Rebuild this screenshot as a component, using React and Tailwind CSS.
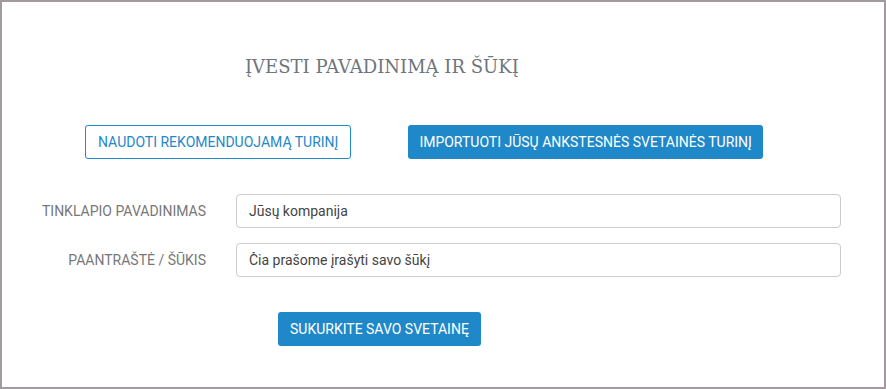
import React from 'react';

function FormRow({ label, value }) {
  return (
    <div className="flex items-center">
      <label className="w-[204px] text-right text-[14px] text-[#777] leading-none">
        {label}
      </label>
      <input
        defaultValue={value}
        className="ml-[30px] w-[605px] h-[34px] px-3 border border-[#ccc] rounded-[4px] text-[14px] text-[#444] bg-white outline-none"
      />
    </div>
  );
}

export default function App() {
  return (
    <div
      className="w-[886px] h-[389px] border-2 border-[#a39a9f] bg-white"
      style={{ fontFamily: 'Roboto, "Liberation Sans", sans-serif' }}
    >
      <div className="flex flex-col">
        <h1
          className="ml-[243px] mt-[51px] text-[18px] leading-[28px] text-[#6f757c]"
          style={{ fontFamily: '"DejaVu Serif", serif' }}
        >
          ĮVESTI PAVADINIMĄ IR ŠŪKĮ
        </h1>

        <div className="flex ml-[83px] mt-[44px] gap-[57px]">
          <button className="h-[34px] px-[12px] border border-[#1f88c9] rounded-[3px] text-[14px] text-[#1f88c9] bg-white">
            NAUDOTI REKOMENDUOJAMĄ TURINĮ
          </button>
          <button className="h-[34px] px-[11px] rounded-[3px] text-[14px] text-white bg-[#1f88c9]">
            IMPORTUOTI JŪSŲ ANKSTESNĖS SVETAINĖS TURINĮ
          </button>
        </div>

        <div className="flex flex-col gap-[15px] mt-[35px]">
          <FormRow label="TINKLAPIO PAVADINIMAS" value="Jūsų kompanija" />
          <FormRow label="PAANTRAŠTĖ / ŠŪKIS" value="Čia prašome įrašyti savo šūkį" />
        </div>

        <div className="ml-[276px] mt-[35px]">
          <button className="h-[34px] px-[12px] rounded-[3px] text-[14px] text-white bg-[#1f88c9]">
            SUKURKITE SAVO SVETAINĘ
          </button>
        </div>
      </div>
    </div>
  );
}
